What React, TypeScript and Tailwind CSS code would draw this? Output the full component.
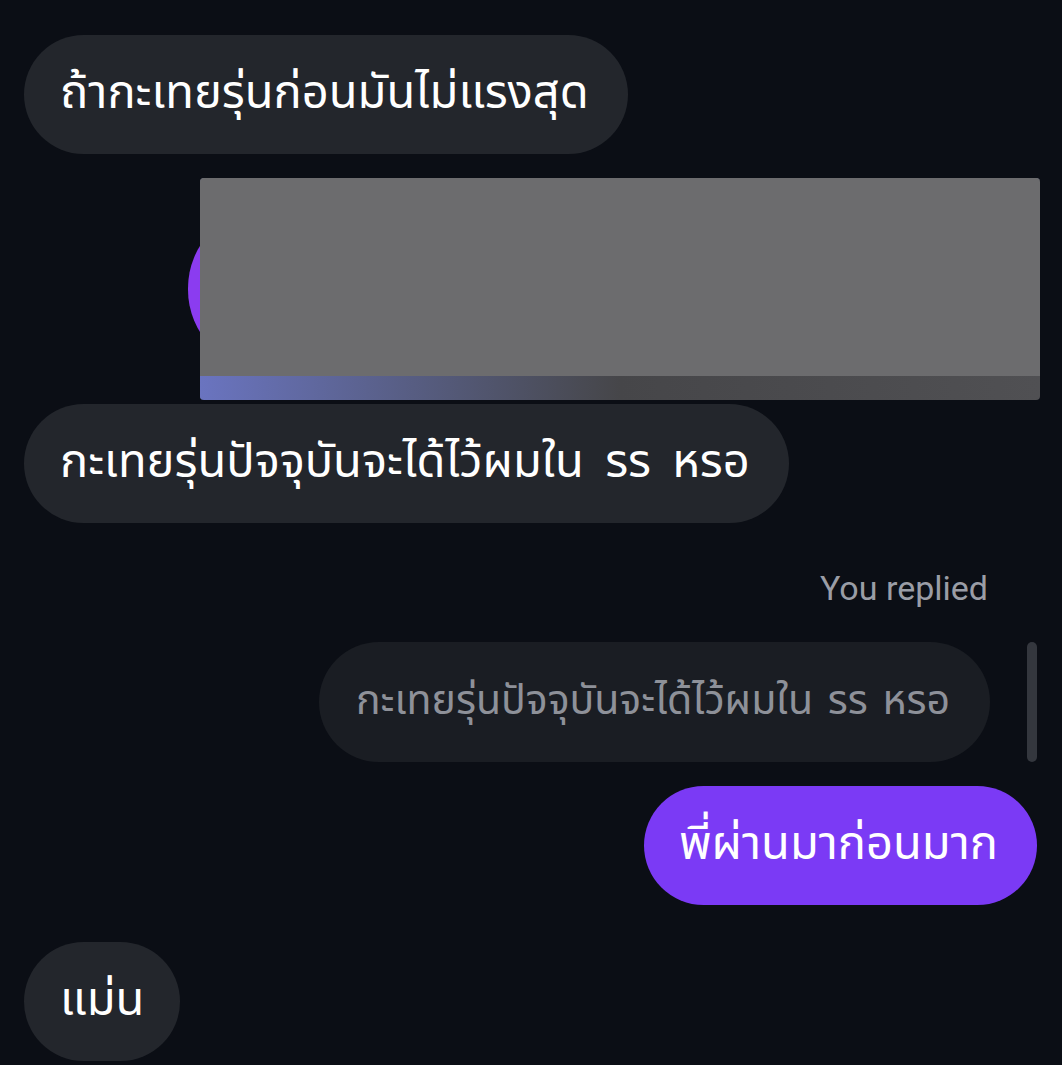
const thai = "font-['Noto_Sans_Thai','Noto_Sans','Liberation_Sans',sans-serif]";

function Incoming({ text, wide }: { text: string; wide?: boolean }) {
    return (
        <div className="flex">
            <div className={`h-[119px] flex items-center pl-[36px] pr-[39px] rounded-full bg-[#23262c] text-white text-[47px] ${thai} ${wide ? '[word-spacing:9px]' : ''}`}>
                {text}
            </div>
        </div>
    );
}

export default function App() {
    return (
        <div className="min-h-[1065px] w-[1062px] bg-[#0b0e15] overflow-hidden">
            <div className="flex flex-col px-6 pt-[35px]">
                <Incoming text="ถ้ากะเทยรุ่นก่อนมันไม่แรงสุด" />

                {/* hidden outgoing message, covered by a grey block */}
                <div className="flex justify-end mt-6 -mr-[2px]">
                    <div className="relative w-[850px] h-[222px]">
                        <div className="absolute left-[-2px] right-[3px] top-[30px] bottom-[30px] rounded-[80px] bg-[#8b3cf0]" />
                        <div className="absolute left-[10px] right-0 top-0 bottom-0 flex flex-col rounded-[4px] overflow-hidden shadow-[inset_2px_2px_0_rgba(170,180,230,0.55)]">
                            <div className="flex-1 bg-[#6c6c6e]" />
                            <div className="h-[24px] bg-gradient-to-r from-[#6a74c0] via-[#464649] to-[#505053]" />
                        </div>
                    </div>
                </div>

                <div className="mt-[4px]">
                    <Incoming text="กะเทยรุ่นปัจจุบันจะได้ไว้ผมใน รร หรอ" wide />
                </div>

                <div className="flex justify-end mt-[48px] pr-[50px]">
                    <span className="text-[34px] leading-[34px] text-[#9a9da6] font-['Roboto',sans-serif]">You replied</span>
                </div>

                <div className="flex justify-end items-stretch gap-[37px] mt-[37px] pr-px">
                    <div className={`h-[120px] flex items-center pl-[37px] pr-[40px] rounded-full bg-[#1a1d23] text-[#8e9199] text-[41px] [word-spacing:4px] ${thai}`}>
                        กะเทยรุ่นปัจจุบันจะได้ไว้ผมใน รร หรอ
                    </div>
                    <div className="w-[10px] rounded-full bg-[#34373e]" />
                </div>

                <div className="flex justify-end mt-6 pr-px">
                    <div className={`h-[119px] flex items-center pl-[35px] pr-[39px] rounded-full bg-[#7b3af5] text-white text-[47px] ${thai}`}>
                        พี่ผ่านมาก่อนมาก
                    </div>
                </div>

                <div className="mt-[37px]">
                    <div className="flex">
                        <div className={`h-[119px] flex items-center pl-[36px] pr-[36px] rounded-full bg-[#23262c] text-white text-[47px] ${thai}`}>
                            แม่น
                        </div>
                    </div>
                </div>
            </div>
        </div>
    );
}
